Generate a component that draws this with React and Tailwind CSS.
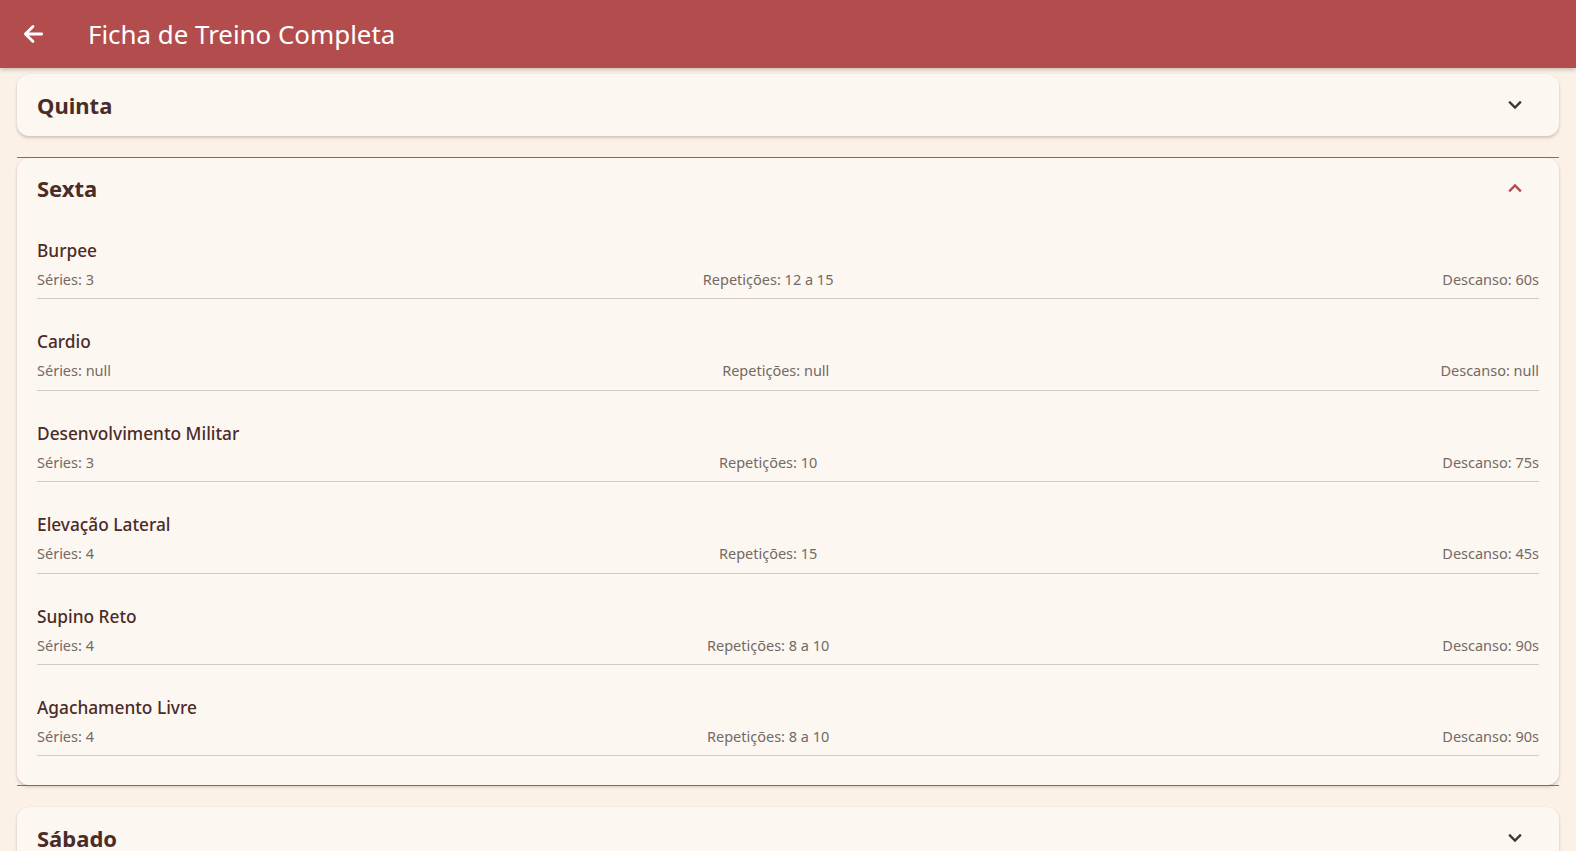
import React from "react";

const font = { fontFamily: '"Noto Sans", "Open Sans", sans-serif' };

const exercises = [
  { name: "Burpee", series: "3", reps: "12 a 15", rest: "60s" },
  { name: "Cardio", series: "null", reps: "null", rest: "null" },
  { name: "Desenvolvimento Militar", series: "3", reps: "10", rest: "75s" },
  { name: "Elevação Lateral", series: "4", reps: "15", rest: "45s" },
  { name: "Supino Reto", series: "4", reps: "8 a 10", rest: "90s" },
  { name: "Agachamento Livre", series: "4", reps: "8 a 10", rest: "90s" },
];

function ChevronDown({ className }) {
  return (
    <svg viewBox="0 0 24 24" className={className} fill="none" stroke="currentColor" strokeWidth="2.4" strokeLinecap="square">
      <path d="M7 9.5l5 5 5-5" />
    </svg>
  );
}

function ChevronUp({ className }) {
  return (
    <svg viewBox="0 0 24 24" className={className} fill="none" stroke="currentColor" strokeWidth="2.4" strokeLinecap="square">
      <path d="M7 14.5l5-5 5 5" />
    </svg>
  );
}

function CollapsedCard({ title }) {
  return (
    <div className="bg-[#fdf7f1] rounded-[12px] shadow-[0_2px_3px_rgba(80,50,40,0.22),0_0_2px_rgba(80,50,40,0.08)] h-[62px] flex items-center justify-between pl-[20px] pr-[32px]">
      <span className="text-[22px] font-bold text-[#4a2c28] leading-[30px]">{title}</span>
      <ChevronDown className="w-[24px] h-[24px] text-[#3f3532]" />
    </div>
  );
}

export default function App() {
  return (
    <div style={font} className="min-h-[851px] bg-[#fbf1e7]">
      <header className="h-[68px] bg-[#b34d4d] flex items-center pl-[20px] shadow-[0_2px_4px_rgba(0,0,0,0.2)]">
        <svg viewBox="0 0 24 24" className="w-[26px] h-[26px] text-white" fill="none" stroke="currentColor" strokeWidth="2.6" strokeLinecap="round" strokeLinejoin="round">
          <path d="M20 12H5M12 5l-7 7 7 7" />
        </svg>
        <h1 className="ml-[42px] text-[25.9px] text-white font-normal leading-[36px]">
          Ficha de Treino Completa
        </h1>
      </header>

      <div className="px-[17px] pt-[6px] overflow-hidden h-[783px]">
        <CollapsedCard title="Quinta" />

        <div className="mt-[21px] border-t border-[#7a716d]" />
        <div className="bg-[#fdf7f1] rounded-[12px] shadow-[0_2px_3px_rgba(80,50,40,0.22),0_0_2px_rgba(80,50,40,0.08)] px-[20px] pb-[29px]">
          <div className="h-[50px] pt-[15px] flex items-start justify-between pr-[12px]">
            <span className="text-[22px] font-bold text-[#4a2c28] leading-[30px]">Sexta</span>
            <ChevronUp className="w-[24px] h-[24px] mt-[3px] text-[#b34d4d]" />
          </div>
          {exercises.map((e) => (
            <div key={e.name} className="pt-[31px] pb-[9.4px] border-b border-[#d3cac4]">
              <div className="text-[17.3px] leading-[24px] text-[#4a2c28] font-medium">{e.name}</div>
              <div className="mt-[6px] flex justify-between text-[14.5px] leading-[20px] text-[#736a66]">
                <span>Séries: {e.series}</span>
                <span>Repetições: {e.reps}</span>
                <span>Descanso: {e.rest}</span>
              </div>
            </div>
          ))}
        </div>
        <div className="border-t border-[#7a716d]" />

        <div className="mt-[21px]">
          <CollapsedCard title="Sábado" />
        </div>
      </div>
    </div>
  );
}
